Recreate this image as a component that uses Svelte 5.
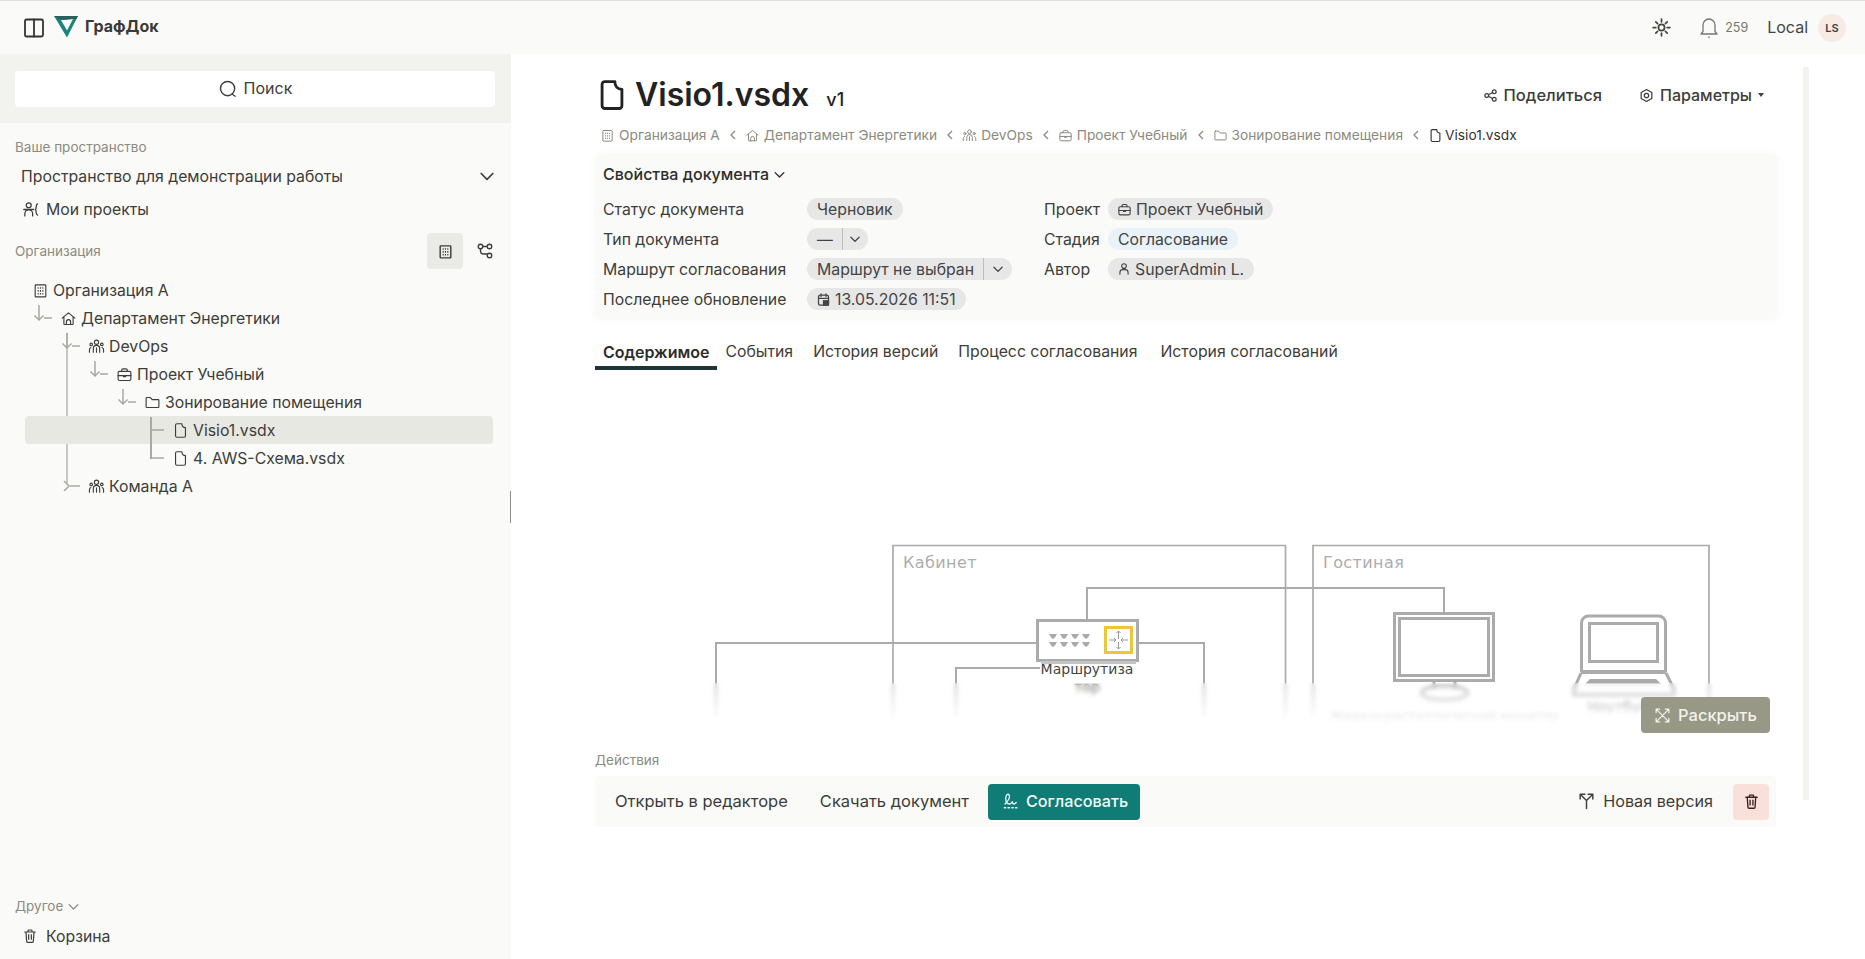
<script>
  const paths = {
    panel: '<rect x="3" y="3.500" width="18" height="17" rx="1.500"/><path d="M12 3.500v17"/>',
    search: '<circle cx="11.500" cy="11.500" r="8.500"/><path d="M17.500 18c.6 1.200 1.600 2.200 3 2.600"/>',
    chevron: '<path d="M5 9l7 7 7-7"/>',
    building: '<rect x="4.500" y="4" width="15" height="17" rx="1"/><path d="M8 8.500h1.500M11.200 8.500h1.500M14.500 8.500h1.500M8 12.500h1.500M11.200 12.500h1.500M14.500 12.500h1.500M8 16.500h1.500M11.200 16.500h1.500M14.500 16.500h1.500" stroke-width="2.200" stroke-linecap="butt"/>',
    graph: '<circle cx="6" cy="6" r="3"/><circle cx="18" cy="6" r="3"/><circle cx="18" cy="18" r="3"/><path d="M9 6h6M6 9v3a4 4 0 0 0 4 4h5"/>',
    person: '<circle cx="12" cy="7" r="4"/><path d="M5 21v-3a5 5 0 0 1 5-5h4a5 5 0 0 1 5 5v3"/>',
    projects: '<circle cx="9.500" cy="6" r="3.500"/><path d="M2.500 12h14M4 21v-3a5.500 5.500 0 0 1 11 0v3M22 4c-2 1-2 2-2 4s0 3-1 4c1 1 1 2 1 4s0 3 2 4"/>',
    home: '<path d="M3 11.500 12 4l9 7.500M5.500 10v9.500a1 1 0 0 0 1 1h11a1 1 0 0 0 1-1V10M9 20.500v-4a3 3 0 0 1 6 0v4"/>',
    team: '<circle cx="12" cy="6" r="3"/><circle cx="4.500" cy="9" r="1.800"/><circle cx="19.500" cy="9" r="1.800"/><path d="M7.500 20v-5a4.500 4.500 0 0 1 9 0v5M12 14v6M2 20v-3a4 4 0 0 1 2-3.500M22 20v-3a4 4 0 0 0-2-3.500"/>',
    case: '<rect x="3" y="7.500" width="18" height="13" rx="2"/><path d="M8 7.500V6a2 2 0 0 1 2-2h4a2 2 0 0 1 2 2v1.500M3 13.500h18M10.500 13.500v1.500h3v-1.500"/>',
    folder: '<path d="M4 5h5l2.500 3H20a1 1 0 0 1 1 1v9a1 1 0 0 1-1 1H4a1 1 0 0 1-1-1V6a1 1 0 0 1 1-1z"/>',
    file: '<path d="M14 2.500H7a2 2 0 0 0-2 2v15a2 2 0 0 0 2 2h10a2 2 0 0 0 2-2V8c-3 0-5-2-5-5.500z"/>',
    trash: '<path d="M4 6h16M9 6V4a1 1 0 0 1 1-1h4a1 1 0 0 1 1 1v2M6 6l1 14a1.500 1.500 0 0 0 1.500 1.500h7A1.500 1.500 0 0 0 17 20l1-14M10 10v7M14 10v7"/>',
    sun: '<circle cx="12" cy="12" r="3.500"/><path d="M12 2.500v3M12 18.500v3M2.500 12h3M18.500 12h3M5.500 5.500l2 2M16.500 16.500l2 2M18.500 5.500l-2 2M7.500 16.500l-2 2"/>',
    bell: '<path d="M12 3a6 6 0 0 0-6 6v6.500l-2 2.500h16l-2-2.500V9a6 6 0 0 0-6-6zM12 21v.5"/>',
    share: '<circle cx="6" cy="12" r="3"/><circle cx="18" cy="6" r="3"/><circle cx="18" cy="18" r="3"/><path d="M8.700 10.700 15.300 7.300M8.700 13.300l6.600 3.400"/>',
    gear: '<path d="M12 2.500l8.500 4.800v9.400L12 21.500l-8.500-4.800V7.300z"/><circle cx="12" cy="12" r="3.500"/>',
    calendar: '<rect x="4" y="5" width="16" height="16" rx="3"/><path d="M8 3v4M16 3v4M4 10h16"/><rect x="11" y="13" width="10" height="9" fill="currentColor" stroke="none"/>',
    sign: '<path d="M4 16c3-3 6-7 6-10 0-2-1-3-2-3-2 0-3 3-3 6 0 4 2 7 5 7 2 0 3-2 4-3 0 2 1 3 2 3s2-1 3-2M3 21h2M8 21h2M13 21h2M18 21h2"/>',
    expand: '<path d="M3 8V3h5M21 8V3h-5M3 16v5h5M21 16v5h-5M3 3l18 18M21 3 3 21"/>',
    fork: '<path d="M12 22V12L4 4M12 12l8-8M4 10V4h6M20 10V4h-6"/>'
  };

  const tree = [
    { name: 'Организация А', icon: 'building', depth: 0 },
    { name: 'Департамент Энергетики', icon: 'home', depth: 1, conn: 'open' },
    { name: 'DevOps', icon: 'team', depth: 2, conn: 'open' },
    { name: 'Проект Учебный', icon: 'case', depth: 3, conn: 'open' },
    { name: 'Зонирование помещения', icon: 'folder', depth: 4, conn: 'open' },
    { name: 'Visio1.vsdx', icon: 'file', depth: 5, conn: 'leaf', active: true },
    { name: '4. AWS-Схема.vsdx', icon: 'file', depth: 5, conn: 'leaf' },
    { name: 'Команда А', icon: 'team', depth: 2, conn: 'closed' }
  ];

  const crumbs = [
    { name: 'Организация А', icon: 'building' },
    { name: 'Департамент Энергетики', icon: 'home' },
    { name: 'DevOps', icon: 'team' },
    { name: 'Проект Учебный', icon: 'case' },
    { name: 'Зонирование помещения', icon: 'folder' }
  ];

  const tabs = ['Содержимое', 'События', 'История версий', 'Процесс согласования', 'История согласований'];
  const ports = [1049, 1060, 1071, 1082];
</script>

{#snippet ic(name, size = 16, sw = 2)}
  <svg class="ic" width={size} height={size} viewBox="0 0 24 24" fill="none" stroke="currentColor" stroke-width={sw} stroke-linecap="round" stroke-linejoin="round">{@html paths[name]}</svg>
{/snippet}

<div class="page">
  <header class="top">
    <div class="brand">
      {@render ic('panel', 24, 1.800)}
      <svg class="logo" width="26" height="23" viewBox="0 0 26 23">
        <path fill-rule="evenodd" d="M1 1H25L14 22.500ZM8 5 14 15.500 20 4Z" fill="#1c857b" />
        <path d="M1 1H25L23.400 4H20L8 5Z" fill="#2d5f5a" />
      </svg>
      <span class="brand-name">ГрафДок</span>
    </div>
    <div class="top-right">
      <span class="sun">{@render ic('sun', 21, 2)}</span>
      <span class="bell">{@render ic('bell', 24, 1.300)}</span>
      <span class="count">259</span>
      <span class="local">Local</span>
      <span class="avatar">LS</span>
    </div>
  </header>

  <div class="body">
    <aside class="side">
      <div class="search-wrap">
        <div class="search">{@render ic('search', 20, 1.700)}<span>Поиск</span></div>
      </div>
      <div class="cap space-cap">Ваше пространство</div>
      <div class="space"><span>Пространство для демонстрации работы</span>{@render ic('chevron', 20, 2)}</div>
      <div class="mine">{@render ic('projects', 17, 1.800)}<span>Мои проекты</span></div>
      <div class="org-head">
        <span class="cap">Организация</span>
        <span class="toggle on">{@render ic('building', 17, 2)}</span>
        <span class="toggle near">{@render ic('graph', 18, 1.800)}</span>
      </div>
      <div class="tree">
        <span class="guide g1"></span>
        <span class="guide g2"></span>
        {#each tree as row}
          <div class="row" class:active={row.active} style="padding-left: {row.depth * 28 + 7}px">
            {#if row.conn}
              <svg class="conn" style="left: {row.depth * 28 - 20}px" width="28" height="28" viewBox="0 0 28 28" fill="none" stroke="#a9a9a2" stroke-width="1.500">
                {#if row.conn === 'open'}
                  <path d="M6 1v15M1.500 11.500 6 16l4.500-4.500M11 14h8" />
                {:else if row.conn === 'closed'}
                  <path d="M3 9l5 5-5 5M9 14h10" />
                {:else}
                  <path d="M6 14h13" />
                {/if}
              </svg>
            {/if}
            {@render ic(row.icon, 17, 1.600)}
            <span>{row.name}</span>
          </div>
        {/each}
      </div>
      <div class="other">
        <div class="cap other-cap">Другое {@render ic('chevron', 15, 2)}</div>
        <div class="mine bin">{@render ic('trash', 16, 1.800)}<span>Корзина</span></div>
      </div>
      <span class="handle"></span>
    </aside>

    <main class="main">
      <div class="content">
        <div class="title-row">
          <span class="title-icon">{@render ic('file', 34, 2)}</span>
          <h1>Visio1.vsdx</h1>
          <span class="ver">v1</span>
          <div class="title-actions">
            <span class="act share">{@render ic('share', 15, 2)}Поделиться</span>
            <span class="act">{@render ic('gear', 15, 2)}Параметры<i class="caret"></i></span>
          </div>
        </div>

        <nav class="crumbs">
          {#each crumbs as c}
            <span class="crumb">{@render ic(c.icon, 15, 1.600)}{c.name}</span>
            <svg class="sep" width="8" height="10" viewBox="0 0 8 10" fill="none" stroke="currentColor" stroke-width="1.300"><path d="M6 1 2 5l4 4" /></svg>
          {/each}
          <span class="crumb last">{@render ic('file', 15, 1.800)}Visio1.vsdx</span>
        </nav>

        <section class="props">
          <div class="props-head">Свойства документа {@render ic('chevron', 15, 2.200)}</div>
          <div class="props-grid">
            <div class="col col-a">
              <div class="prow"><label>Статус документа</label><span class="pill">Черновик</span></div>
              <div class="prow"><label>Тип документа</label><span class="pill split short"><span>—</span><b>{@render ic('chevron', 14, 2.200)}</b></span></div>
              <div class="prow"><label>Маршрут согласования</label><span class="pill split"><span>Маршрут не выбран</span><b>{@render ic('chevron', 14, 2.200)}</b></span></div>
              <div class="prow"><label>Последнее обновление</label><span class="pill ico">{@render ic('calendar', 15, 2)}13.05.2026 11:51</span></div>
            </div>
            <div class="col col-b">
              <div class="prow"><label>Проект</label><span class="pill ico">{@render ic('case', 15, 1.800)}Проект Учебный</span></div>
              <div class="prow"><label>Стадия</label><span class="pill blue">Согласование</span></div>
              <div class="prow"><label>Автор</label><span class="pill ico">{@render ic('person', 14, 1.900)}SuperAdmin L.</span></div>
            </div>
          </div>
        </section>

        <div class="tabs">
          {#each tabs as t, i}
            <span class="tab" class:current={i === 0}>{t}</span>
          {/each}
        </div>

        <div class="diagram">
          <svg class="canvas" width="1183" height="341" viewBox="595 385 1183 341" fill="none" stroke="#ababab">
            <path d="M893 720V546.500H1285.500V720M1313 720V546.500H1709V720" stroke-width="1.700" />
            <path d="M1087 620V589H1444V613M1036 644H716V720M1138 644H1204V720M1040 669H956V720" stroke-width="2" />
            <text class="room" x="903" y="569">Кабинет</text>
            <text class="room" x="1323" y="569">Гостиная</text>

            <rect x="1037.500" y="621.500" width="100" height="40" fill="#fff" stroke-width="3" />
            <path d="M1041 663.500H1136" stroke-width="3" stroke="#c4c4c4" />
            {#each ports as x}
              <path d="M{x} 635h8l-2 3.500-2 1.500-2-1.500zM{x} 643h8l-2 3.500-2 1.500-2-1.500z" fill="#aaa" stroke="none" />
            {/each}
            <rect x="1105.500" y="628.500" width="26" height="25" fill="#fff" stroke="#eec53a" stroke-width="3" />
            <path d="M1118.500 640V632M1116.500 634l2-2 2 2M1118.500 643v7M1116.500 648l2 2 2-2M1109 641h7M1114 639l2 2-2 2M1128 641h-7M1123 639l-2 2 2 2" stroke="#999" stroke-width="1" />
            <text class="node" x="1087" y="675">Маршрутиза</text>
            <text class="node" x="1087" y="693">тор</text>

            <rect x="1394.500" y="614.500" width="99" height="67" fill="#fff" stroke-width="3" />
            <rect x="1399.500" y="619.500" width="89" height="57" stroke-width="3" />
            <path d="M1434 683v7M1455 683v7" stroke-width="3" />
            <ellipse cx="1444.500" cy="694" rx="23" ry="7" stroke-width="3" />
            <text class="node small" x="1444" y="722">Жидкокристаллический монитор</text>

            <path d="M1581.500 673V624a7 7 0 0 1 7-7h70a7 7 0 0 1 7 7v49" stroke-width="3" />
            <rect x="1589.500" y="624.500" width="68" height="38" stroke-width="3" />
            <path d="M1581 673H1666" stroke-width="4" />
            <path d="M1581 674 1574 690v6H1674V690L1666 674" stroke-width="3" />
            <path d="M1590 680H1656L1661 685H1585z" fill="#aaa" stroke="none" />
            <text class="node" x="1618" y="713">Ноутбук</text>
          </svg>
          <div class="fade"></div>
          <span class="expand">{@render ic('expand', 17, 1.700)}Раскрыть</span>
        </div>

        <div class="cap act-cap">Действия</div>
        <div class="actions">
          <span class="a-btn">Открыть в редакторе</span>
          <span class="a-btn second">Скачать документ</span>
          <span class="approve">{@render ic('sign', 18, 1.700)}Согласовать</span>
          <span class="a-btn newver">{@render ic('fork', 19, 1.800)}Новая версия</span>
          <span class="del">{@render ic('trash', 17, 1.900)}</span>
        </div>
      </div>
      <span class="scroll"></span>
    </main>
  </div>
</div>

<style>
  :global(body) {
    margin: 0;
    background: #fff;
  }

  .page {
    width: 1865px;
    height: 959px;
    overflow: hidden;
    font-family: Inter, "Noto Sans", sans-serif;
    font-size: 15.800px;
    color: #3d3d3a;
    display: flex;
    flex-direction: column;
  }

  .ic {
    flex: none;
    display: block;
  }

  .top {
    height: 53px;
    border-top: 1px solid #dedede;
    background: #fafaf8;
    display: flex;
    align-items: center;
    justify-content: space-between;
    padding: 0 19px 0 22px;
    flex: none;
  }

  .brand {
    display: flex;
    align-items: center;
    color: #333;
  }

  .logo {
    margin: -2px 0 0 7px;
  }

  .brand-name {
    margin-left: 6px;
    padding-bottom: 3px;
    font-weight: 700;
    font-size: 16px;
    color: #3a3a38;
  }

  .top-right {
    display: flex;
    align-items: center;
    color: #44443f;
  }

  .bell {
    margin-left: 25px;
    color: #777770;
  }

  .count {
    margin-left: 4px;
    font-size: 12.500px;
    color: #77776f;
  }

  .local {
    margin-left: 19px;
    padding-bottom: 2px;
    font-size: 16px;
  }

  .avatar {
    margin-left: 10px;
    width: 28px;
    height: 28px;
    border-radius: 50%;
    background: #f7ebe4;
    display: flex;
    align-items: center;
    justify-content: center;
    font-size: 11px;
    font-weight: 600;
  }

  .body {
    flex: 1;
    display: grid;
    grid-template-columns: 511px 1fr;
    min-height: 0;
  }

  .side {
    position: relative;
    background: #fafaf8;
    display: flex;
    flex-direction: column;
  }

  .search-wrap {
    background: #f2f2ee;
    padding: 17px 16px 16px 15px;
  }

  .search {
    height: 36px;
    background: #fff;
    border-radius: 4px;
    display: flex;
    align-items: center;
    justify-content: center;
    gap: 6px;
  }

  .search span {
    padding-bottom: 2px;
    font-size: 16px;
  }

  .cap {
    font-size: 13.500px;
    color: #8b8b82;
  }

  .space-cap {
    margin: 15px 0 0 15px;
    line-height: 18px;
  }

  .space {
    margin: 9px 14px 0 21px;
    height: 22px;
    display: flex;
    align-items: center;
    justify-content: space-between;
  }

  .mine {
    display: flex;
    align-items: center;
    gap: 7px;
    margin: 11px 0 0 22px;
    height: 22px;
  }

  .org-head {
    margin: 13px 8px 0 15px;
    display: flex;
    align-items: center;
  }

  .org-head .cap {
    flex: 1;
  }

  .toggle {
    width: 36px;
    height: 36px;
    border-radius: 4px;
    display: flex;
    align-items: center;
    justify-content: center;
  }

  .toggle.on {
    background: #eaeae6;
  }

  .toggle.near {
    margin-left: 4px;
  }

  .tree {
    position: relative;
    margin: 7px 18px 0 25px;
  }

  .guide {
    position: absolute;
    width: 2px;
    background: #c8c8c0;
  }

  .g1 {
    left: 41px;
    top: 57px;
    height: 150px;
  }

  .g2 {
    left: 125px;
    top: 141px;
    height: 42px;
    width: 1.500px;
    z-index: 1;
    background: #a9a9a2;
  }

  .row {
    position: relative;
    height: 28px;
    border-radius: 4px;
    display: flex;
    align-items: center;
    gap: 4px;
  }

  .row.active {
    background: #e8e8e3;
  }

  .conn {
    position: absolute;
    top: 0;
  }

  .other {
    margin: auto 0 0 15px;
    padding-bottom: 12px;
  }

  .other-cap {
    display: flex;
    align-items: center;
    gap: 3px;
    height: 20px;
  }

  .bin {
    margin: 9px 0 0 7px;
    gap: 8px;
  }

  .handle {
    position: absolute;
    right: 0;
    top: 437px;
    width: 1px;
    height: 32px;
    background: #8d8d8d;
  }

  .main {
    position: relative;
    background: #fff;
    padding: 0 0 0 84px;
  }

  .content {
    width: 1187px;
  }

  .title-row {
    display: flex;
    align-items: center;
    height: 62px;
    margin-top: 10px;
  }

  .title-icon {
    color: #222;
  }

  h1 {
    margin: 0 0 0 6px;
    font-size: 32px;
    font-weight: 600;
    color: #222;
    line-height: 40px;
  }

  .ver {
    margin: 8px 0 0 17px;
    font-size: 18px;
    font-weight: 500;
    color: #222;
  }

  .title-actions {
    margin-left: auto;
    display: flex;
    gap: 37px;
    padding-right: 18px;
  }

  .act {
    display: flex;
    align-items: center;
    gap: 6px;
    font-weight: 500;
    font-size: 16px;
  }

  .share {
    font-size: 16.500px;
  }

  .caret {
    margin-left: 0;
    border: 3.500px solid transparent;
    border-top: 4px solid #44443f;
    border-bottom: 0;
  }

  .crumbs {
    display: flex;
    align-items: center;
    height: 22px;
    margin: -2px 0 0 5px;
    font-size: 13.750px;
    color: #8b8b80;
  }

  .crumb {
    display: flex;
    align-items: center;
    gap: 4px;
  }

  .sep {
    margin: 0 8px 0 9px;
  }

  .crumb.last {
    color: #333;
    gap: 2px;
  }

  .props {
    margin: 8px 4px 0 0;
    padding: 10px 8px 0;
    height: 156px;
    background: #fafaf9;
    border-radius: 6px;
    box-shadow: 0 0 8px 2px #fbfbfa;
  }

  .props-head {
    display: flex;
    align-items: center;
    gap: 3px;
    font-weight: 500;
    font-size: 16px;
    color: #2d2d2b;
    height: 20px;
  }

  .props-grid {
    display: flex;
    margin-top: 10px;
  }

  .col-a {
    width: 441px;
  }

  .prow {
    height: 30px;
    display: flex;
    align-items: center;
  }

  .col-a label {
    width: 204px;
  }

  .col-b label {
    width: 64px;
  }

  .pill {
    height: 22px;
    padding: 0 10px;
    border-radius: 11px;
    background: #e7e7e7;
    display: inline-flex;
    align-items: center;
    gap: 3px;
    color: #444;
    font-size: 15.800px;
  }

  .pill.blue {
    background: #e9f2f9;
  }

  .pill.ico {
    padding-left: 9px;
    gap: 4px;
  }

  .pill.split {
    padding-right: 0;
  }

  .split b {
    border-left: 1px solid #bdbdbd;
    height: 22px;
    width: 28px;
    margin-left: 6px;
    display: flex;
    align-items: center;
    justify-content: center;
    font-weight: 400;
  }

  .short b {
    width: 25px;
  }

  .tabs {
    display: flex;
    margin-top: 19px;
    height: 31px;
  }

  .tab {
    padding: 0 10px;
    line-height: 26px;
  }

  .tab:first-child {
    padding: 0 8px;
    font-weight: 600;
    font-size: 16px;
    color: #2d2d2b;
    border-bottom: 4px solid #1f3533;
    margin-right: -2px;
  }

  .tab:last-child {
    margin-left: 3px;
  }

  .diagram {
    position: relative;
    margin-top: 14px;
    height: 341px;
    width: 1183px;
  }

  .canvas {
    display: block;
  }

  .room {
    font-family: "DejaVu Sans", sans-serif;
    font-size: 16px;
    letter-spacing: 0.400px;
    fill: #adadad;
    stroke: none;
  }

  .node {
    font-family: "DejaVu Sans", sans-serif;
    font-size: 14px;
    fill: #444;
    stroke: none;
    text-anchor: middle;
  }

  .node.small {
    font-size: 13px;
  }

  .fade {
    position: absolute;
    left: 0;
    right: 0;
    bottom: 0;
    height: 42px;
    background: linear-gradient(rgba(255, 255, 255, 0.2), rgba(255, 255, 255, 0.93) 85%);
    backdrop-filter: blur(2px);
  }

  .expand {
    position: absolute;
    left: 1046px;
    top: 313px;
    width: 129px;
    height: 36px;
    box-sizing: border-box;
    padding-left: 13px;
    background: #989886;
    color: #f2f2ec;
    border-radius: 4px;
    display: flex;
    align-items: center;
    gap: 7px;
    font-weight: 500;
    font-size: 16.500px;
  }

  .act-cap {
    margin-top: 26px;
    line-height: 18px;
  }

  .actions {
    margin-top: 7px;
    width: 1181px;
    height: 51px;
    box-sizing: border-box;
    background: #fafaf9;
    border-radius: 4px;
    display: flex;
    align-items: center;
    padding: 0 7px 0 20px;
  }

  .a-btn {
    font-size: 16.500px;
    padding-bottom: 2px;
  }

  .second {
    margin-left: 32px;
  }

  .approve {
    margin-left: 19px;
    height: 36px;
    width: 152px;
    box-sizing: border-box;
    padding: 0 0 1px 14px;
    border-radius: 4px;
    background: #0f7d75;
    color: #f2f7f6;
    font-weight: 500;
    font-size: 16.200px;
    display: flex;
    align-items: center;
    gap: 6px;
  }

  .newver {
    margin-left: auto;
    display: flex;
    align-items: center;
    gap: 7px;
    font-size: 16.200px;
  }

  .del {
    margin-left: 20px;
    width: 36px;
    height: 36px;
    border-radius: 4px;
    background: #f9e1da;
    color: #3b2020;
    display: flex;
    align-items: center;
    justify-content: center;
  }

  .scroll {
    position: absolute;
    top: 13px;
    left: 1292px;
    width: 6px;
    height: 733px;
    background: #f3f3ef;
  }
</style>
